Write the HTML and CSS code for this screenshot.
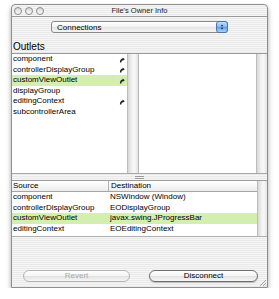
FILE: index.html
```html
<!DOCTYPE html>
<html lang="en">
<head>
    <meta charset="UTF-8">
    <title>File's Owner Info</title>
    <link rel="stylesheet" href="styles.css">
</head>
<body>

    <div class="window">
        <div class="titlebar">
            <div class="lights"><span></span><span></span><span></span></div>
            <div class="title">File's Owner Info</div>
        </div>

        <div class="toolbar">
            <div class="popup">
                <span class="popup-label">Connections</span>
                <span class="stepper">
                    <svg width="12" height="12" viewBox="0 0 12 12">
                        <path d="M4.5 5 L6 3 L7.5 5 Z" fill="#1a2a4a"/>
                        <path d="M4.5 7 L6 9 L7.5 7 Z" fill="#1a2a4a"/>
                    </svg>
                </span>
            </div>
        </div>

        <div class="section-label">Outlets</div>

        <div class="browser">
            <div class="column col-left">
                <div class="list">
                    <div class="item">component<svg class="plug" viewBox="0 0 6 6"><path d="M1.6 5.6 C1.6 3.4 2.6 2.2 4.2 2.2" stroke="#1e1e1e" stroke-width="1.4" fill="none"/><path d="M3.6 0.6 L5.8 2.2 L3.6 3.8 Z" fill="#1e1e1e"/></svg></div>
                    <div class="item">controllerDisplayGroup<svg class="plug" viewBox="0 0 6 6"><path d="M1.6 5.6 C1.6 3.4 2.6 2.2 4.2 2.2" stroke="#1e1e1e" stroke-width="1.4" fill="none"/><path d="M3.6 0.6 L5.8 2.2 L3.6 3.8 Z" fill="#1e1e1e"/></svg></div>
                    <div class="item selected">customViewOutlet<svg class="plug" viewBox="0 0 6 6"><path d="M1.6 5.6 C1.6 3.4 2.6 2.2 4.2 2.2" stroke="#1e1e1e" stroke-width="1.4" fill="none"/><path d="M3.6 0.6 L5.8 2.2 L3.6 3.8 Z" fill="#1e1e1e"/></svg></div>
                    <div class="item">displayGroup</div>
                    <div class="item">editingContext<svg class="plug" viewBox="0 0 6 6"><path d="M1.6 5.6 C1.6 3.4 2.6 2.2 4.2 2.2" stroke="#1e1e1e" stroke-width="1.4" fill="none"/><path d="M3.6 0.6 L5.8 2.2 L3.6 3.8 Z" fill="#1e1e1e"/></svg></div>
                    <div class="item">subcontrollerArea</div>
                </div>
                <div class="scroller"></div>
            </div>
            <div class="column col-right">
                <div class="list"></div>
                <div class="scroller"></div>
            </div>
        </div>

        <div class="splitter"><span class="dimple"></span></div>

        <div class="table">
            <div class="table-body">
                <div class="row header">
                    <span class="cell src">Source</span>
                    <span class="cell dst">Destination</span>
                </div>
                <div class="row">
                    <span class="cell src">component</span>
                    <span class="cell dst">NSWindow (Window)</span>
                </div>
                <div class="row">
                    <span class="cell src">controllerDisplayGroup</span>
                    <span class="cell dst">EODisplayGroup</span>
                </div>
                <div class="row selected">
                    <span class="cell src">customViewOutlet</span>
                    <span class="cell dst">javax.swing.JProgressBar</span>
                </div>
                <div class="row">
                    <span class="cell src">editingContext</span>
                    <span class="cell dst">EOEditingContext</span>
                </div>
            </div>
            <div class="scroller"></div>
        </div>

        <div class="buttons">
            <button class="btn disabled">Revert</button>
            <button class="btn">Disconnect</button>
        </div>

        <svg class="grip" width="8" height="8" viewBox="0 0 8 8">
            <path d="M7 1 L1 7 M7 4 L4 7 M7 6.5 L6.5 7" stroke="#8a8a8a" stroke-width="0.8"/>
        </svg>
    </div>

</body>
</html>
```

FILE: styles.css
```css
body {
    margin: 0;
    background: #ffffff;
    font-family: 'Liberation Sans', Arial, sans-serif;
    font-size: 8px;
    color: #000000;
}
.window {
    position: relative;
    box-sizing: border-box;
    width: 257px;
    height: 284px;
    margin: 4px 0 0 11px;
    border: 1px solid #8e8e8e;
    border-radius: 4px 4px 0 0;
    background: repeating-linear-gradient(#f6f6f6 0, #f6f6f6 1px, #e9e9e9 1px, #e9e9e9 2px);
    box-shadow: 0 3px 5px rgba(0, 0, 0, 0.35);
    display: flex;
    flex-direction: column;
}
.titlebar {
    height: 11px;
    border-bottom: 1px solid #9a9a9a;
    display: flex;
    align-items: center;
    position: relative;
}
.lights {
    display: flex;
    gap: 3px;
    padding-left: 2px;
}
.lights span {
    width: 6px;
    height: 6px;
    border-radius: 50%;
    border: 1px solid #8c8c8c;
    background: linear-gradient(#d8d8d8, #fbfbfb);
}
.title {
    position: absolute;
    left: 0;
    right: 0;
    text-align: center;
    font-size: 7.5px;
    line-height: 11px;
    color: #222222;
}
.toolbar {
    padding: 4px 0 0 39px;
    height: 12px;
}
.popup {
    box-sizing: border-box;
    width: 177px;
    height: 12px;
    border: 1px solid #8a8a8a;
    border-radius: 3px;
    background: linear-gradient(#ffffff, #f2f2f2 50%, #e4e4e4 51%, #f4f4f4);
    display: flex;
    align-items: center;
    justify-content: space-between;
}
.popup-label {
    padding-left: 5px;
    font-size: 8px;
}
.stepper {
    width: 12px;
    height: 12px;
    margin: -1px -1px -1px 0;
    border-radius: 3px;
    border: 1px solid #4a76b0;
    box-sizing: border-box;
    background: linear-gradient(#c4e0fb, #7eb7f0 50%, #5a9de6 51%, #a9d6fb);
    display: flex;
    align-items: center;
    justify-content: center;
}
.stepper svg {
    display: block;
}
.section-label {
    margin-top: 7px;
    height: 13px;
    line-height: 13px;
    padding-left: 1px;
    font-size: 10px;
}
.browser {
    height: 119px;
    border-top: 1px solid #9a9a9a;
    display: flex;
    background: #ffffff;
}
.column {
    display: flex;
}
.col-left {
    width: 126px;
}
.col-right {
    flex: 1;
    border-left: 1px solid #b8b8b8;
}
.list {
    flex: 1;
    background: #ffffff;
}
.item {
    position: relative;
    height: 10.5px;
    line-height: 10.5px;
    padding-left: 1px;
}
.item.selected, .row.selected {
    background: #d3eeae;
}
.plug {
    position: absolute;
    right: 2px;
    top: 2.5px;
    width: 6px;
    height: 6px;
}
.scroller {
    width: 10px;
    border-left: 1px solid #bdbdbd;
    background: linear-gradient(to right, #d6d6d6, #efefef 35%, #f8f8f8 65%, #e2e2e2);
}
.splitter {
    height: 7px;
    border-top: 1px solid #a8a8a8;
    box-sizing: border-box;
    display: flex;
    justify-content: center;
    align-items: center;
}
.dimple {
    width: 9px;
    height: 1px;
    border-top: 1px solid #9a9a9a;
    border-bottom: 1px solid #9a9a9a;
}
.table {
    height: 57px;
    display: flex;
    border-top: 1px solid #9a9a9a;
    border-bottom: 1px solid #b0b0b0;
    box-sizing: border-box;
    background: #ffffff;
}
.table-body {
    flex: 1;
}
.row {
    display: flex;
    height: 10.6px;
    line-height: 10.6px;
}
.row.header {
    height: 10px;
    line-height: 10px;
    background: linear-gradient(#ffffff, #ececec);
    border-bottom: 1px solid #a5a5a5;
}
.cell.src {
    width: 95px;
    padding-left: 1px;
}
.header .cell.src {
    border-right: 1px solid #b4b4b4;
}
.cell.dst {
    padding-left: 2px;
}
.table .scroller {
    width: 9px;
}
.buttons {
    display: flex;
    justify-content: space-between;
    padding: 33px 9px 0 11px;
}
.btn {
    box-sizing: border-box;
    height: 12px;
    padding: 0;
    border: 1px solid #6e6e6e;
    border-radius: 6px;
    background: linear-gradient(#ffffff, #f4f4f4 50%, #e2e2e2 51%, #f6f6f6);
    font-family: 'Liberation Sans', Arial, sans-serif;
    font-size: 8px;
    line-height: 10px;
    color: #000000;
    box-shadow: 0 1px 1px rgba(0, 0, 0, 0.2);
}
.btn:first-child {
    width: 107px;
}
.btn:last-child {
    width: 109px;
}
.btn.disabled {
    border-color: #b4b4b4;
    color: #a8a8a8;
    box-shadow: none;
}
.grip {
    position: absolute;
    right: 0;
    bottom: 0;
}
```
